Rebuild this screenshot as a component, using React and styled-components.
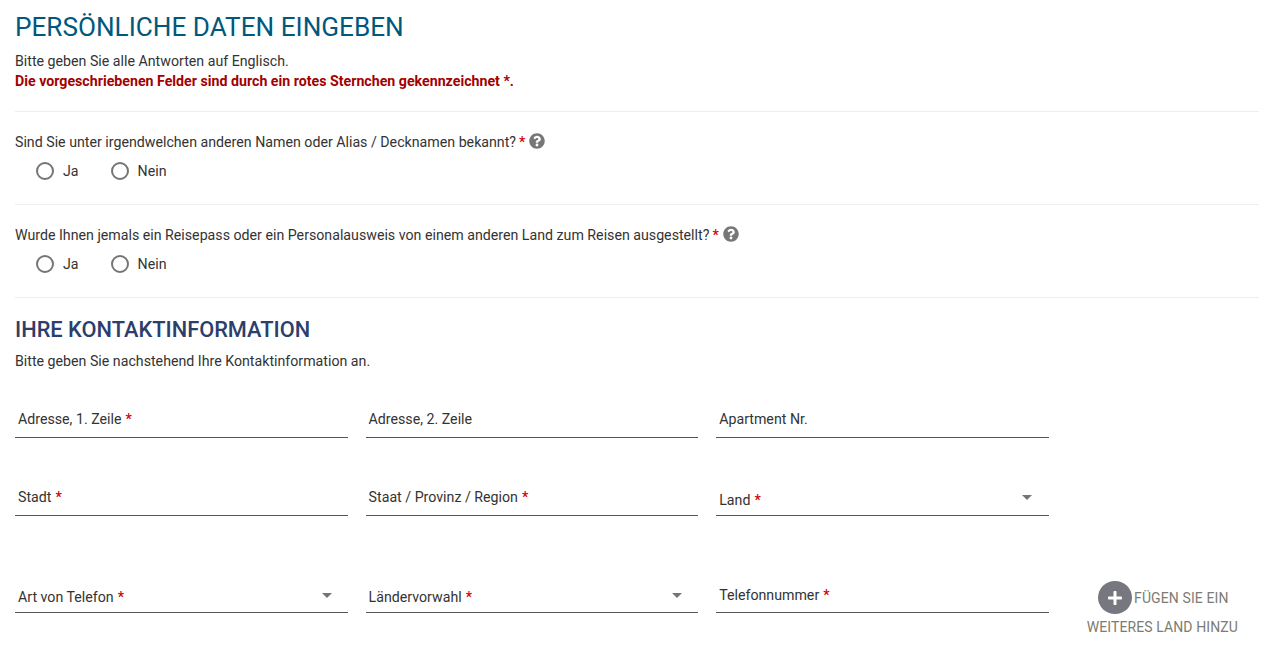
import styled, { createGlobalStyle } from 'styled-components';
import { FaQuestionCircle, FaPlus } from 'react-icons/fa';

const GlobalStyle = createGlobalStyle`
  html, body {
    margin: 0;
    padding: 0;
    background: #fff;
    overflow: hidden;
    font-family: Roboto, "Liberation Sans", sans-serif;
    color: #333;
  }
`;

const Page = styled.div`
  width: 1270px;
  height: 645px;
  box-sizing: border-box;
  padding: 10px 11px 0 15px;
  overflow: hidden;
`;

const Title = styled.h1`
  margin: 0;
  font-size: 26.15px;
  line-height: 34px;
  font-weight: 400;
  color: #00587c;
`;

const Text = styled.p`
  margin: 0;
  font-size: 14.2px;
  line-height: 20px;
  color: #333;
`;

const Intro = styled(Text)`
  margin-top: 7px;
`;

const Warning = styled.p`
  margin: 0;
  font-size: 14.2px;
  line-height: 20px;
  font-weight: 700;
  color: #a30000;
`;

const Divider = styled.hr`
  margin: ${(props) => props.$top}px 0 0;
  border: 0;
  border-top: 1px solid #eee;
`;

const Question = styled.div`
  margin-top: 20px;
  display: flex;
  align-items: center;
  font-size: 14.2px;
  line-height: 20px;
  color: #333;
`;

const Star = styled.span`
  color: #d40000;
  font-weight: 500;
  margin-left: ${(props) => props.$gap || 3}px;
`;

const Help = styled.span`
  display: inline-flex;
  margin: -1px 0 1px 4px;
  color: #777;
  font-size: 16px;
`;

const RadioRow = styled.div`
  display: flex;
  margin-top: 9px;
  padding-left: 21px;
  gap: 32px;
`;

const RadioItem = styled.label`
  display: flex;
  align-items: center;
  gap: 9px;
  font-size: 14.2px;
  line-height: 20px;
  color: #333;
`;

const RadioCircle = styled.span`
  width: 18px;
  height: 18px;
  box-sizing: border-box;
  border: 2px solid #757575;
  border-radius: 50%;
`;

const SubTitle = styled.h2`
  margin: 18px 0 0;
  font-size: 21.8px;
  line-height: 28px;
  font-weight: 500;
  color: #2c3e6b;
`;

const SubText = styled(Text)`
  margin-top: 7px;
`;

const FieldGrid = styled.div`
  display: grid;
  grid-template-columns: repeat(3, 332.6px) 190px;
  column-gap: 18px;
  margin-top: ${(props) => props.$top}px;
`;

const Field = styled.div`
  height: 48px;
  box-sizing: border-box;
  border-bottom: 1px solid #555;
  padding: 0 3px ${(props) => props.$bottom || 8}px;
  display: flex;
  align-items: flex-end;
  justify-content: space-between;
  font-size: 14.2px;
  line-height: 20px;
  color: #333;
`;

const Arrow = styled.span`
  width: 0;
  height: 0;
  margin: 0 13px 9px 0;
  border-left: 5.5px solid transparent;
  border-right: 5.5px solid transparent;
  border-top: 5px solid #757575;
`;

const LandArrow = styled(Arrow)`
  margin: 0 14px 10px 0;
`;

const AddCountry = styled.div`
  margin-left: 8px;
  margin-top: 16px;
  width: 175px;
  text-align: center;
  font-size: 14px;
  line-height: 20px;
  color: #7c7c72;
  letter-spacing: 0.1px;
`;

const AddTop = styled.div`
  display: flex;
  align-items: center;
  justify-content: center;
  gap: 2px;
  padding-left: 2px;
`;

const AddIcon = styled.span`
  width: 34px;
  height: 33px;
  border-radius: 50%;
  background: #77777f;
  color: #fff;
  display: flex;
  align-items: center;
  justify-content: center;
  font-size: 16px;
`;

const AddBottom = styled.div`
  margin-top: 3px;
`;

function Required({ children, gap }) {
  return (
    <span>
      {children}
      <Star $gap={gap}>*</Star>
    </span>
  );
}

function YesNo() {
  return (
    <RadioRow>
      <RadioItem><RadioCircle />Ja</RadioItem>
      <RadioItem><RadioCircle />Nein</RadioItem>
    </RadioRow>
  );
}

export default function App() {
  return (
    <Page>
      <GlobalStyle />
      <Title>PERSÖNLICHE DATEN EINGEBEN</Title>
      <Intro>Bitte geben Sie alle Antworten auf Englisch.</Intro>
      <Warning>Die vorgeschriebenen Felder sind durch ein rotes Sternchen gekennzeichnet *.</Warning>
      <Divider $top={20} />

      <Question>
        <Required>Sind Sie unter irgendwelchen anderen Namen oder Alias / Decknamen bekannt?</Required>
        <Help><FaQuestionCircle /></Help>
      </Question>
      <YesNo />
      <Divider $top={23} />

      <Question>
        <Required>Wurde Ihnen jemals ein Reisepass oder ein Personalausweis von einem anderen Land zum Reisen ausgestellt?</Required>
        <Help><FaQuestionCircle /></Help>
      </Question>
      <YesNo />
      <Divider $top={23} />

      <SubTitle>IHRE KONTAKTINFORMATION</SubTitle>
      <SubText>Bitte geben Sie nachstehend Ihre Kontaktinformation an.</SubText>

      <FieldGrid $top={19}>
        <Field><Required gap={4}>Adresse, 1. Zeile</Required></Field>
        <Field>Adresse, 2. Zeile</Field>
        <Field>Apartment Nr.</Field>
      </FieldGrid>

      <FieldGrid $top={30}>
        <Field><Required gap={4}>Stadt</Required></Field>
        <Field><Required gap={4}>Staat / Provinz / Region</Required></Field>
        <Field $bottom={5}><Required gap={4}>Land</Required><LandArrow /></Field>
      </FieldGrid>

      <FieldGrid $top={49}>
        <Field $bottom={5}><Required gap={4}>Art von Telefon</Required><Arrow /></Field>
        <Field $bottom={5}><Required gap={4}>Ländervorwahl</Required><Arrow /></Field>
        <Field $bottom={7}><Required gap={4}>Telefonnummer</Required></Field>
        <AddCountry>
          <AddTop>
            <AddIcon><FaPlus /></AddIcon>
            FÜGEN SIE EIN
          </AddTop>
          <AddBottom>WEITERES LAND HINZU</AddBottom>
        </AddCountry>
      </FieldGrid>
    </Page>
  );
}
